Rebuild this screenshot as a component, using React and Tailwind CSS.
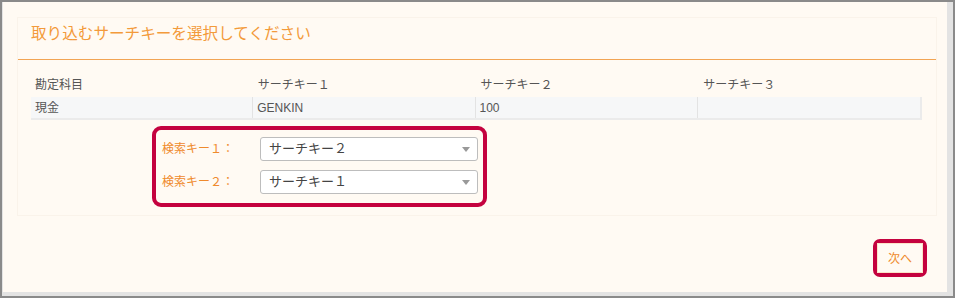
export default function App() {
  const headers = ['勘定科目', 'サーチキー１', 'サーチキー２', 'サーチキー３'];
  const row = ['現金', 'GENKIN', '100', ''];
  const keys = [
    { label: '検索キー１：', value: 'サーチキー２' },
    { label: '検索キー２：', value: 'サーチキー１' },
  ];

  return (
    <div
      className="w-[955px] h-[298px] border-2 border-[#8a8a8a] bg-[#e3e3e3] flex"
      style={{ fontFamily: '"Liberation Sans", "Noto Sans CJK JP", sans-serif' }}
    >
      <div className="ml-[1px] mr-[6px] mb-[4px] flex-1 bg-[#fffaf3] pt-[15px] pl-[14px] pr-[10px] flex flex-col">
        {/* main card */}
        <div className="w-[920px] border border-[#faf3ea] bg-[#fffaf3]">
          <div className="pl-[13px] pt-[5px] pb-[14px] leading-[22px] text-[15.6px] text-[#f39a3b] border-b border-[#f2a453]">
            取り込むサーチキーを選択してください
          </div>

          <div className="ml-[13px] mt-[13px] w-[891px]">
            <div className="grid grid-cols-4 h-[24px] items-center text-[12px] text-[#555]">
              {headers.map((h) => (
                <div key={h} className="pl-[4px]">{h}</div>
              ))}
            </div>
            <div className="grid grid-cols-4 h-[23px] bg-[#f6f7f8] border-b-2 border-r-2 border-[#ebebeb] text-[12px] text-[#555]">
              {row.map((c, i) => (
                <div
                  key={i}
                  className={`pl-[4px] flex items-center ${i < 3 ? 'border-r border-[#e3e3e3]' : ''}`}
                >
                  {c}
                </div>
              ))}
            </div>
          </div>

          <div className="ml-[134px] mt-[6px] mb-[8px] w-[335px] border-4 border-[#c4023f] rounded-[9px] pt-[7px] pb-[9px] pl-[6px] pr-[5px] flex flex-col gap-[9px]">
            {keys.map((k) => (
              <div key={k.label} className="flex items-center">
                <div className="w-[98px] text-[12px] text-[#ef8a2c]">{k.label}</div>
                <div className="w-[218px] h-[24px] bg-white border border-[#bdbdbd] rounded-[3px] flex items-center justify-between pl-[8px] pr-[7px] text-[13px] text-[#444]">
                  <span>{k.value}</span>
                  <svg width="8" height="5" viewBox="0 0 8 5">
                    <path d="M0 0 L8 0 L4 5 Z" fill="#999" />
                  </svg>
                </div>
              </div>
            ))}
          </div>
        </div>

        {/* footer */}
        <div className="flex justify-end pr-[10px] mt-[23px]">
          <div className="w-[54px] h-[38px] border-4 border-[#c4023f] rounded-[7px] flex">
            <button className="flex-1 border border-[#fbe3c8] bg-[#fffaf3] text-[12px] text-[#ef8a2c] flex items-center justify-center pt-[1px]">
              次へ
            </button>
          </div>
        </div>
      </div>
    </div>
  );
}
